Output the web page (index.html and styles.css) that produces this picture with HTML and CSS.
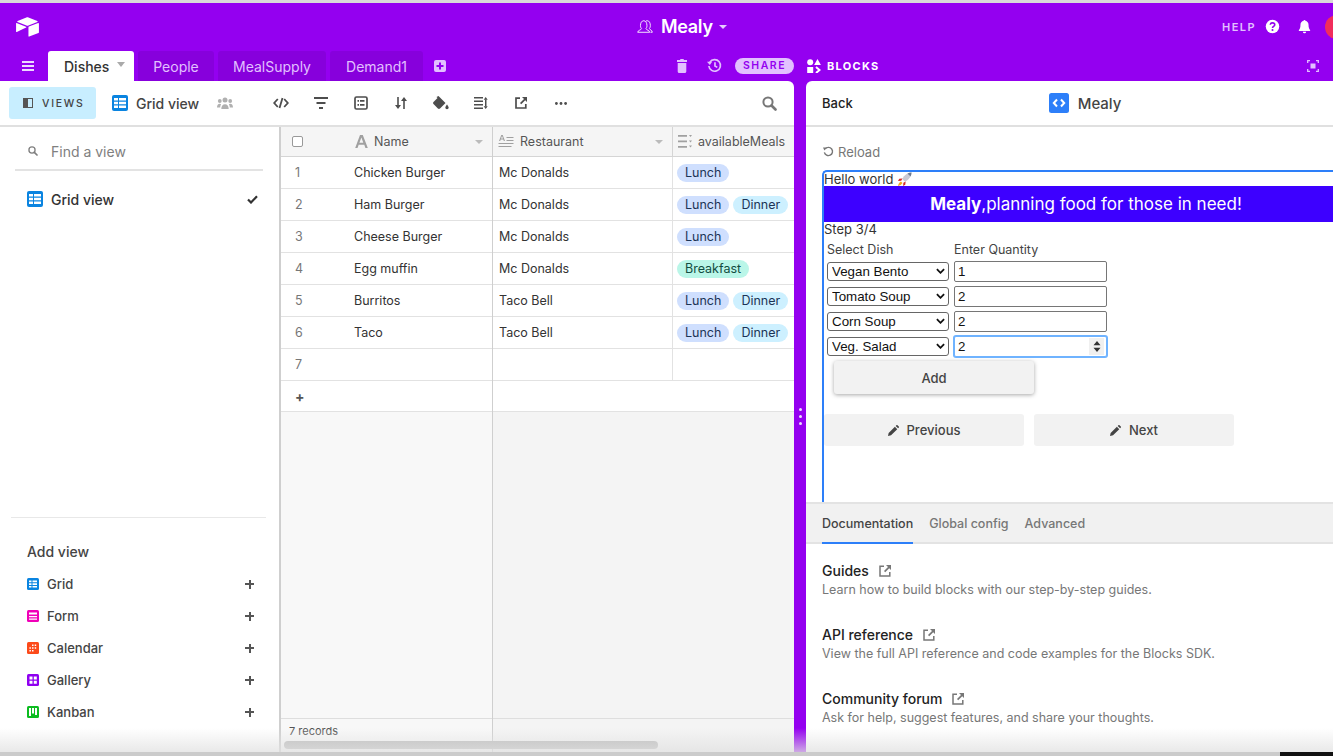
FILE: index.html
```html
<!DOCTYPE html>
<html lang="en">
<head>
<meta charset="utf-8">
<title>Mealy</title>
<link rel="stylesheet" href="styles.css">
</head>
<body>
<div class="page">
  <div class="topstrip"></div>
  <header class="topbar">
    <svg class="logo" viewBox="0 0 24 21"><path fill="#fff" d="M10.8.5 1.6 4.1c-.5.2-.5.9 0 1.1l9.3 3.7c.7.3 1.4.3 2.1 0l9.300-3.700c.5-.2.5-.9 0-1.100L13 .5c-.7-.3-1.500-.3-2.200 0zM13 10.700V20c0 .4.400.7.800.6l9.700-3.800c.3-.1.500-.4.500-.6V7c0-.4-.4-.7-.8-.6l-9.700 3.700c-.3.100-.5.400-.5.600zM10.700 11l-2.900 1.400-7 3.400c-.4.200-.8-.1-.8-.5V6.800c0-.2.100-.3.200-.4h.3l9.900 3.900c.5.200.6.500.300.700z"/></svg>
    <div class="base-title">
      <svg class="base-users" viewBox="0 0 18 16"><g fill="none" stroke="#fff" stroke-width="1"><path d="M.8 14.500c0-2.200 3.800-2.500 4.300-4-.4-.5-1.200-1.400-1.200-3.500 0-3 1.300-5.500 3.700-5.500 2.300 0 3.600 2.500 3.600 5.500 0 2.100-.8 3-1.200 3.500.5 1.500 4.300 1.800 4.300 4z"/><path d="M10.200 1.800c.4-.2.800-.3 1.300-.3 2.300 0 3.500 2.500 3.500 5.500 0 2.100-.8 3-1.100 3.500.3 1.200 3.300 1.500 3.300 4h-2"/></g></svg>
      <span class="base-name">Mealy</span>
      <span class="caret caret-white"></span>
    </div>
    <div class="top-right">
      <span class="help">HELP</span>
      <svg class="ic16" viewBox="0 0 16 16"><circle cx="8" cy="8" r="7.200" fill="#fff"/><path d="M5.600 6.200C5.700 4.800 6.700 4.100 8 4.100c1.400 0 2.400.8 2.400 2 0 1.900-2.400 1.800-2.400 3.500" fill="none" stroke="#9400f0" stroke-width="1.700"/><circle cx="8" cy="11.800" r="1.100" fill="#9400f0"/></svg>
      <svg class="ic16 bell" viewBox="0 0 16 16"><path fill="#fff" d="M8 1c-.6 0-1 .4-1 .9C5 2.400 3.700 4 3.700 6.200c0 3.300-.7 4.400-1.700 5.600-.3.400 0 .9.400.9h11.200c.4 0 .7-.5.400-.9-1-1.200-1.700-2.300-1.700-5.600C12.300 4 11 2.400 9 1.900 9 1.400 8.600 1 8 1zM6.300 13.500a1.700 1.700 0 0 0 3.400 0z"/></svg>
      <span class="avatar"></span>
    </div>
  </header>
  <nav class="tabbar">
    <div class="tabbar-left">
      <svg class="menu" viewBox="0 0 12 10"><path fill="#eed9ff" d="M0 0h12v2H0zM0 4h12v2H0zM0 8h12v2H0z"/></svg>
      <div class="tab tab-active">Dishes<span class="caret caret-gray"></span></div>
      <div class="tab">People</div>
      <div class="tab">MealSupply</div>
      <div class="tab">Demand1</div>
      <svg class="add-tab" viewBox="0 0 12 12"><path fill="#e2c0ff" fill-rule="evenodd" d="M2 0h8a2 2 0 0 1 2 2v8a2 2 0 0 1-2 2H2a2 2 0 0 1-2-2V2a2 2 0 0 1 2-2zm3 2.500v2.500H2.500v2H5v2.500h2V7h2.500V5H7V2.500z"/></svg>
      <div class="tab-actions">
        <svg class="trash" viewBox="0 0 10 14"><path fill="#e2c0ff" d="M3.500 0h3l.5 1h3v2H0V1h3zM.7 4h8.600v8.500c0 .8-.7 1.500-1.500 1.500H2.200c-.8 0-1.500-.7-1.500-1.500z"/></svg>
        <svg class="history" viewBox="0 0 16 16"><g fill="none" stroke="#e2c0ff" stroke-width="1.800"><path d="M3 4.500A6.200 6.200 0 1 1 2 8.500"/><path d="M8.500 4.500v4l2.500 1.500"/></g><path fill="#e2c0ff" d="M0 4h5.500L3 7.500z"/></svg>
        <span class="share">SHARE</span>
      </div>
    </div>
    <div class="gutter-top"></div>
    <div class="tabbar-right">
      <div class="blocks">
        <svg class="blocks-ic" viewBox="0 0 14 14"><circle cx="3.200" cy="3.200" r="3" fill="#fff"/><path fill="#fff" d="M10.500 0l3.400 6H7.100zM.2 8h6v6h-6z"/><path fill="none" stroke="#fff" stroke-width="2" d="M9 8l3.500 3L9 14"/></svg>
        <span>BLOCKS</span>
      </div>
      <svg class="fullscreen" viewBox="0 0 12 12"><path fill="none" stroke="#e2c0ff" stroke-width="1.300" d="M.7 3V.7H3M9 .7h2.300V3M11.300 9v2.300H9M3 11.300H.7V9"/><rect x="3.500" y="3.500" width="5" height="5" fill="#e2c0ff"/></svg>
    </div>
  </nav>
  <main class="main">
    <section class="left-panel">
      <div class="toolbar">
        <div class="views-btn">
          <svg class="views-ic" viewBox="0 0 10 10"><path fill="#555" d="M0 0h10v10H0z"/><path fill="#c8eeff" d="M5 1h4v8H5z"/></svg>
          <span>VIEWS</span>
        </div>
        <svg class="grid-ic" viewBox="0 0 16 16"><rect width="16" height="16" rx="2" fill="#0a84e0"/><path fill="#fff" d="M2 3h4v2.500H2zM7 3h7v2.500H7zM2 6.800h4v2.500H2zM7 6.800h7v2.500H7zM2 10.600h4v2.500H2zM7 10.600h7v2.500H7z"/></svg>
        <span class="view-name">Grid view</span>
        <svg class="people-ic" viewBox="0 0 16 12"><g fill="#b0b0b0"><circle cx="8" cy="3" r="2.500"/><circle cx="2.800" cy="4" r="1.900"/><circle cx="13.200" cy="4" r="1.900"/><path d="M4.300 12c0-3 1.500-4.800 3.700-4.800s3.700 1.800 3.700 4.800zM0 10.500c0-2.200 1-3.700 2.800-3.700.6 0 1 .2 1.300.4C3.500 8 3.200 9.200 3.200 10.500zM16 10.500c0-2.200-1-3.700-2.800-3.700-.6 0-1 .2-1.300.4.600.8.900 2 .9 3.300z"/></g></svg>
        <div class="tools">
          <span class="tool"><svg viewBox="0 0 16 12" width="16" height="12"><path fill="none" stroke="#4d4d4d" stroke-width="1.800" d="M4.800 2 1.200 6l3.600 4M11.200 2l3.600 4-3.600 4M9.500 1 6.500 11"/></svg></span>
          <span class="tool"><svg viewBox="0 0 14 12" width="14" height="12"><path fill="#4d4d4d" d="M0 0h14v2H0zM2.500 5h9v2h-9zM5 10h4v2H5z"/></svg></span>
          <span class="tool"><svg viewBox="0 0 14 14" width="14" height="14"><rect x="1" y="1" width="12" height="12" rx="1.500" fill="none" stroke="#4d4d4d" stroke-width="1.700"/><path fill="#4d4d4d" d="M3.500 4h1.500v1.700H3.500zM6 4h4.500v1.700H6zM3.500 8h1.500v1.700H3.500zM6 8h4.500v1.700H6z"/></svg></span>
          <span class="tool"><svg viewBox="0 0 12 12" width="12" height="12"><path fill="#4d4d4d" d="M2.200 0h1.600v8H6L3 12 0 8h2.200zM8.200 12h1.600V4H12L9 0 6 4h2.200z"/></svg></span>
          <span class="tool"><svg viewBox="0 0 16 14" width="16" height="14"><path fill="#4d4d4d" d="M5.500 0 7 1.500l5.500 5.500-5.500 5.500c-.6.600-1.500.6-2.100 0L.5 8.100c-.6-.6-.6-1.500 0-2.100l4-4-1-1zM14 8.500s1.700 2 1.700 3.100a1.700 1.700 0 0 1-3.400 0c0-1.100 1.700-3.100 1.700-3.100z"/></svg></span>
          <span class="tool"><svg viewBox="0 0 14 12" width="14" height="12"><path fill="#4d4d4d" d="M0 0h9v1.600H0zM0 3.400h9V5H0zM0 6.900h9v1.600H0zM0 10.400h9V12H0zM11 2.500h1.500v7H11z"/><path fill="#4d4d4d" d="M11.700 0l2 2.800h-4zM11.700 12l-2-2.800h4z"/></svg></span>
          <span class="tool"><svg viewBox="0 0 12 12" width="12" height="12"><path fill="none" stroke="#4d4d4d" stroke-width="1.700" d="M5 1.200H1v9.800h9.800V7"/><path fill="#4d4d4d" d="M7 0h5v5l-1.800-1.800-4 4L5 6l4-4z"/></svg></span>
          <span class="tool"><svg viewBox="0 0 12 3" width="12" height="3"><g fill="#4d4d4d"><circle cx="1.400" cy="1.500" r="1.400"/><circle cx="6" cy="1.500" r="1.400"/><circle cx="10.600" cy="1.500" r="1.400"/></g></svg></span>
        </div>
        <svg class="search-ic" viewBox="0 0 15 15"><circle cx="6" cy="6" r="4.600" fill="none" stroke="#777" stroke-width="2"/><path d="M9.500 9.500l4 4" stroke="#777" stroke-width="2.600" stroke-linecap="round"/></svg>
      </div>
      <div class="left-body">
        <aside class="sidebar">
          <div class="find">
            <svg class="find-ic" viewBox="0 0 15 15"><circle cx="6" cy="6" r="4.600" fill="none" stroke="#808080" stroke-width="2"/><path d="M9.500 9.500l4 4" stroke="#808080" stroke-width="2.600" stroke-linecap="round"/></svg>
            <span>Find a view</span>
          </div>
          <div class="view-item">
            <svg class="grid-ic-s" viewBox="0 0 16 16"><rect width="16" height="16" rx="2" fill="#0a84e0"/><path fill="#fff" d="M2 3h4v2.500H2zM7 3h7v2.500H7zM2 6.800h4v2.500H2zM7 6.800h7v2.500H7zM2 10.600h4v2.500H2zM7 10.600h7v2.500H7z"/></svg>
            <span class="view-item-name">Grid view</span>
            <svg class="check" viewBox="0 0 11 9"><path fill="none" stroke="#333" stroke-width="2.200" d="M1 4.500 4 7.500 10 1.200"/></svg>
          </div>
          <div class="sidebar-space"></div>
          <div class="add-view">
            <div class="add-title">Add view</div>
            <div class="add-row">
              <svg class="add-ic" viewBox="0 0 12 12"><rect width="12" height="12" rx="1.500" fill="#0a84e0"/><path fill="#fff" d="M2 2.500h2.500v1.700H2zM5.500 2.500H10v1.700H5.500zM2 5.200h2.500v1.700H2zM5.500 5.200H10v1.700H5.500zM2 7.900h2.500v1.700H2zM5.500 7.900H10v1.700H5.500z"/></svg>
              <span class="add-name">Grid</span><span class="plus"></span>
            </div>
            <div class="add-row">
              <svg class="add-ic" viewBox="0 0 12 12"><rect width="12" height="12" rx="1.500" fill="#f000b8"/><path fill="#fff" d="M2 2.500h8v2H2zM2 6h8v1.300H2zM2 8.500h8v1.300H2z"/></svg>
              <span class="add-name">Form</span><span class="plus"></span>
            </div>
            <div class="add-row">
              <svg class="add-ic" viewBox="0 0 12 12"><rect width="12" height="12" rx="1.500" fill="#fc4a1a"/><path fill="#fff" d="M5 2.500h1.500V4H5zM7.700 2.500h1.500V4H7.700zM2.400 5.200h1.500v1.500H2.400zM5 5.200h1.500v1.500H5zM7.700 5.200h1.500v1.500H7.700zM2.400 7.900h1.500v1.500H2.400zM5 7.900h1.500v1.500H5z"/></svg>
              <span class="add-name">Calendar</span><span class="plus"></span>
            </div>
            <div class="add-row">
              <svg class="add-ic" viewBox="0 0 12 12"><rect width="12" height="12" rx="1.500" fill="#8f00f0"/><path fill="#fff" d="M2.500 2.500h3v3h-3zM6.800 2.500h3v3h-3zM2.500 6.800h3v3h-3zM6.800 6.800h3v3h-3z"/></svg>
              <span class="add-name">Gallery</span><span class="plus"></span>
            </div>
            <div class="add-row">
              <svg class="add-ic" viewBox="0 0 12 12"><rect width="12" height="12" rx="1.500" fill="#0cbc20"/><path fill="#fff" d="M2 2h2v8H2zM5 2h2v5.500H5zM8 2h2v7H8z"/></svg>
              <span class="add-name">Kanban</span><span class="plus"></span>
            </div>
          </div>
        </aside>
        <div class="grid">
          <div class="pane pane-left">
            <div class="cell-head head-left">
              <span class="checkbox"></span>
              <svg class="field-a" viewBox="0 0 13 13"><path fill="#a0a0a0" d="M5 0h2.800l5 13h-2.400l-1.100-3.200H3.700L2.500 13H.2zM4.400 7.800h3.900L6.400 2.500z"/></svg>
              <span class="head-label">Name</span>
              <span class="caret caret-light"></span>
            </div>
            <div class="row"><span class="num">1</span><span class="name">Chicken Burger</span></div>
            <div class="row"><span class="num">2</span><span class="name">Ham Burger</span></div>
            <div class="row"><span class="num">3</span><span class="name">Cheese Burger</span></div>
            <div class="row"><span class="num">4</span><span class="name">Egg muffin</span></div>
            <div class="row"><span class="num">5</span><span class="name">Burritos</span></div>
            <div class="row"><span class="num">6</span><span class="name">Taco</span></div>
            <div class="row"><span class="num">7</span><span class="name"></span></div>
            <div class="row row-add"><span class="num plus-num">+</span></div>
            <div class="pane-fill"></div>
            <div class="records">7 records</div>
          </div>
          <div class="pane pane-right">
            <div class="head-right">
              <div class="cell-head col-rest">
                <svg class="field-long" viewBox="0 0 15 13"><g fill="#a0a0a0"><path d="M2.800 0h1.400l2.300 6H5.300l-.5-1.500H2.200L1.700 6H.5zM2.500 3.500h2L3.500 1z"/><path d="M8 2h7v1H8zM8 5h7v1H8zM0 8h15v1H0zM0 11h13v1H0z"/></g></svg>
                <span class="head-label">Restaurant</span>
                <span class="caret caret-light"></span>
              </div>
              <div class="cell-head col-meals">
                <svg class="field-multi" viewBox="0 0 14 13"><g fill="#a0a0a0"><path d="M0 0h9v1.700H0zM0 5.500h9v1.700H0zM0 11h9v1.700H0zM11 0h3l-1.500 2zM11 5.500h3l-1.500 2zM11 10.500h3l-1.500 2z"/></g></svg>
                <span class="head-label">availableMeals</span>
              </div>
            </div>
            <div class="row-r"><span class="rest">Mc Donalds</span><span class="meals"><span class="pill lunch">Lunch</span></span></div>
            <div class="row-r"><span class="rest">Mc Donalds</span><span class="meals"><span class="pill lunch">Lunch</span><span class="pill dinner">Dinner</span></span></div>
            <div class="row-r"><span class="rest">Mc Donalds</span><span class="meals"><span class="pill lunch">Lunch</span></span></div>
            <div class="row-r"><span class="rest">Mc Donalds</span><span class="meals"><span class="pill breakfast">Breakfast</span></span></div>
            <div class="row-r"><span class="rest">Taco Bell</span><span class="meals"><span class="pill lunch">Lunch</span><span class="pill dinner">Dinner</span></span></div>
            <div class="row-r"><span class="rest">Taco Bell</span><span class="meals"><span class="pill lunch">Lunch</span><span class="pill dinner">Dinner</span></span></div>
            <div class="row-r"><span class="rest"></span><span class="meals"></span></div>
            <div class="row-r row-r-add"></div>
            <div class="pane-fill"></div>
            <div class="records records-r"></div>
          </div>
          <div class="hscroll"></div>
        </div>
      </div>
    </section>
    <div class="gutter"><i></i><i></i><i></i></div>
    <section class="right-panel">
      <div class="block-head">
        <span class="back">Back</span>
        <div class="block-title">
          <svg class="block-ic" viewBox="0 0 20 20"><rect width="20" height="20" rx="2.500" fill="#2d7ff9"/><path fill="none" stroke="#fff" stroke-width="2" d="M8 6.500 4.800 10 8 13.500M12 6.500 15.200 10 12 13.500"/></svg>
          <span>Mealy</span>
        </div>
      </div>
      <div class="reload">
        <svg class="reload-ic" viewBox="0 0 12 12"><path fill="none" stroke="#777" stroke-width="1.500" d="M2.500 3A4.500 4.500 0 1 1 1.500 7"/><path fill="#777" d="M0 1.500h4.500L1.500 5z"/></svg>
        <span>Reload</span>
      </div>
      <div class="frame">
        <div class="hello">Hello world <svg class="rocket" viewBox="0 0 16 16"><path fill="#c9c9d4" d="M15.500.5C11.500.6 7.800 3 5.500 7.500l3 3C13 8.200 15.400 4.500 15.500.5z"/><path fill="#6c7a90" d="M15.500.5c-1.500 0-3 .4-4.300 1l3.300 3.300c.6-1.300 1-2.800 1-4.300z"/><path fill="#d62a2a" d="M5.800 6.800 2.500 7.200 1 9.500l3.500-.3zM9.200 10.200l-.4 3.300L6.500 15l.3-3.500z"/><path fill="#f4a81c" d="M4.200 10.200C2.500 11 1.500 13 1 15c2-.5 4-1.500 4.800-3.200z"/></svg></div>
        <div class="banner"><b>Mealy</b>,planning food for those in need!</div>
        <div class="step">Step 3/4</div>
        <div class="form">
          <div class="labels"><span class="lab-dish">Select Dish</span><span>Enter Quantity</span></div>
          <div class="frow">
            <span class="sel-wrap"><select class="sel"><option>Vegan Bento</option></select><svg class="chev" viewBox="0 0 10 6"><path fill="none" stroke="#111" stroke-width="2" d="M1 1l4 4 4-4"/></svg></span>
            <input class="qty" value="1">
          </div>
          <div class="frow">
            <span class="sel-wrap"><select class="sel"><option>Tomato Soup</option></select><svg class="chev" viewBox="0 0 10 6"><path fill="none" stroke="#111" stroke-width="2" d="M1 1l4 4 4-4"/></svg></span>
            <input class="qty" value="2">
          </div>
          <div class="frow">
            <span class="sel-wrap"><select class="sel"><option>Corn Soup</option></select><svg class="chev" viewBox="0 0 10 6"><path fill="none" stroke="#111" stroke-width="2" d="M1 1l4 4 4-4"/></svg></span>
            <input class="qty" value="2">
          </div>
          <div class="frow">
            <span class="sel-wrap"><select class="sel"><option>Veg. Salad</option></select><svg class="chev" viewBox="0 0 10 6"><path fill="none" stroke="#111" stroke-width="2" d="M1 1l4 4 4-4"/></svg></span>
            <span class="qty-wrap"><input class="qty qty-focus" value="2"><span class="spin"><svg viewBox="0 0 8 11" width="8" height="11"><path fill="#333" d="M4 0l3.500 4.300h-7zM4 11 .5 6.700h7z"/></svg></span></span>
          </div>
        </div>
        <div class="add-btn">Add</div>
        <div class="nav-btns">
          <div class="nav-btn"><svg class="pencil" viewBox="0 0 12 12"><path fill="#444" d="M0 12l.7-3.300L7.500 1.900l2.600 2.600-6.800 6.800zM8.400 1 9.200.2c.3-.3.800-.3 1.100 0l1.500 1.500c.3.300.3.800 0 1.100l-.8.800z"/></svg>Previous</div>
          <div class="nav-btn"><svg class="pencil" viewBox="0 0 12 12"><path fill="#444" d="M0 12l.7-3.300L7.500 1.900l2.600 2.600-6.800 6.800zM8.400 1 9.200.2c.3-.3.800-.3 1.100 0l1.500 1.500c.3.300.3.800 0 1.100l-.8.800z"/></svg>Next</div>
        </div>
      </div>
      <div class="doc-tabs">
        <span class="doc-tab doc-tab-active">Documentation</span>
        <span class="doc-tab">Global config</span>
        <span class="doc-tab">Advanced</span>
      </div>
      <div class="docs">
        <div class="doc">
          <div class="doc-title">Guides<svg class="ext" viewBox="0 0 12 12"><path fill="none" stroke="#777" stroke-width="1.500" d="M5 1.200H1v9.800h9.800V7"/><path fill="#777" d="M7 0h5v5l-1.800-1.800-4 4L5 6l4-4z"/></svg></div>
          <div class="doc-text">Learn how to build blocks with our step-by-step guides.</div>
        </div>
        <div class="doc">
          <div class="doc-title">API reference<svg class="ext" viewBox="0 0 12 12"><path fill="none" stroke="#777" stroke-width="1.500" d="M5 1.200H1v9.800h9.800V7"/><path fill="#777" d="M7 0h5v5l-1.800-1.800-4 4L5 6l4-4z"/></svg></div>
          <div class="doc-text">View the full API reference and code examples for the Blocks SDK.</div>
        </div>
        <div class="doc">
          <div class="doc-title">Community forum<svg class="ext" viewBox="0 0 12 12"><path fill="none" stroke="#777" stroke-width="1.500" d="M5 1.200H1v9.800h9.800V7"/><path fill="#777" d="M7 0h5v5l-1.800-1.800-4 4L5 6l4-4z"/></svg></div>
          <div class="doc-text">Ask for help, suggest features, and share your thoughts.</div>
        </div>
      </div>
    </section>
    <div class="fade"></div>
  </main>
  <footer class="bottom"><span class="bottom-dark"></span></footer>
</div>
</body>
</html>
```
FILE: styles.css
```css
* { box-sizing: border-box; }
html, body { margin: 0; height: 100%; overflow: hidden; }
body { font-family: Inter, "Liberation Sans", sans-serif; color: #333; background: #fff; }
.page { width: 1333px; height: 756px; display: flex; flex-direction: column; overflow: hidden; background: #9400f0; }
.topstrip { height: 3px; background: #d9d9d9; flex: none; }

.topbar { height: 47px; flex: none; display: flex; align-items: center; padding-left: 16px; position: relative; }
.logo { width: 23px; height: 20px; margin-top: 0; }
.base-title { display: flex; align-items: center; margin-left: 598px; }
.base-users { width: 16px; height: 15px; }
.base-name { color: #fff; font-size: 18px; font-weight: 600; margin-left: 8px; letter-spacing: -.3px; }
.caret { width: 0; height: 0; border-left: 4px solid transparent; border-right: 4px solid transparent; display: inline-block; }
.caret-white { border-top: 4px solid #e6ccff; margin-left: 6px; }
.caret-gray { border-top: 5px solid #aaa; margin-left: 8px; position: relative; top: -2px; }
.caret-light { border-top: 4px solid #bbb; margin-left: auto; }
.top-right { display: flex; align-items: center; margin-left: auto; width: 111px; flex: none; }
.help { color: #e2c0ff; font-size: 11px; font-weight: 600; letter-spacing: 1.500px; }
.ic16 { width: 15px; height: 15px; margin-left: 9px; flex: none; }
.bell { margin-left: 17px; }
.avatar { width: 24px; height: 24px; border-radius: 50%; background: #f12d5c; margin-left: 13px; flex: none; }

.tabbar { height: 31px; flex: none; display: flex; align-items: stretch; }
.tabbar-left { width: 794px; flex: none; display: flex; align-items: flex-end; padding-left: 22px; }
.menu { width: 12px; height: 10px; margin: 0 14px 10px 0; flex: none; }
.tab { height: 30px; padding: 0 15px; margin-right: 4px; background: #8700dc; color: #e2c0ff; font-size: 14px; display: flex; align-items: center; border-radius: 3px 3px 0 0; }
.tab-active { width: 86px; padding: 0 0 0 16px; background: #fff; color: #333; font-weight: 500; }
.tab:nth-child(3) { width: 76px; padding: 0; justify-content: center; }
.tab:nth-child(4) { width: 108px; padding: 0; justify-content: center; }
.tab:nth-child(5) { width: 93px; padding: 0; justify-content: center; }
.add-tab { width: 12px; height: 12px; margin: 0 0 9px 7px; flex: none; }
.tab-actions { margin-left: auto; display: flex; align-items: center; height: 31px; }
.trash { width: 10px; height: 14px; margin-right: 20px; }
.history { width: 15px; height: 15px; margin-right: 13px; }
.share { width: 59px; height: 16px; border-radius: 8px; background: #e2c0ff; color: #9400f0; font-size: 10.500px; font-weight: 600; letter-spacing: 1.500px; display: flex; align-items: center; justify-content: center; }
.gutter-top { width: 12px; flex: none; }
.tabbar-right { flex: 1; display: flex; align-items: center; justify-content: space-between; padding-right: 14px; }
.blocks { display: flex; align-items: center; color: #fff; font-size: 11px; font-weight: 700; letter-spacing: 1.300px; }
.blocks-ic { width: 14px; height: 14px; margin: 0 6px 0 1px; }
.fullscreen { width: 12px; height: 12px; }

.main { flex: 1; display: flex; min-height: 0; position: relative; }
.left-panel { width: 794px; flex: none; background: #fff; border-radius: 0 6px 0 0; display: flex; flex-direction: column; overflow: hidden; }
.toolbar { height: 46px; flex: none; border-bottom: 2px solid #e0e0e0; display: flex; align-items: center; padding-left: 9px; }
.views-btn { width: 87px; height: 32px; background: #c8eeff; border-radius: 3px; display: flex; align-items: center; padding-left: 14px; color: #444; font-size: 10.500px; font-weight: 500; letter-spacing: 1.700px; flex: none; }
.views-ic { width: 10px; height: 10px; margin-right: 9px; }
.grid-ic { width: 16px; height: 16px; margin-left: 16px; flex: none; }
.view-name { font-size: 14px; font-weight: 500; color: #444; margin-left: 8px; width: 65px; white-space: nowrap; }
.people-ic { width: 16px; height: 12px; margin-left: 16px; flex: none; }
.tools { display: flex; margin-left: 28px; }
.tool { width: 40px; display: flex; justify-content: center; align-items: center; }
.search-ic { width: 15px; height: 15px; margin-left: auto; margin-right: 17px; }

.left-body { flex: 1; display: flex; min-height: 0; }
.sidebar { width: 281px; flex: none; border-right: 2px solid #cfcfcf; display: flex; flex-direction: column; background: #fff; }
.find { margin: 0 16px 0 15px; height: 44px; border-bottom: 2px solid #e3e3e3; display: flex; align-items: center; padding: 6px 0 0 13px; color: #808080; font-size: 14px; }
.find-ic { width: 10px; height: 10px; margin-right: 13px; }
.view-item { display: flex; align-items: center; margin: 19px 21px 0 27px; height: 18px; }
.grid-ic-s { width: 16px; height: 16px; flex: none; }
.view-item-name { margin-left: 8px; font-size: 14px; font-weight: 500; color: #333; }
.check { width: 11px; height: 9px; margin-left: auto; }
.sidebar-space { flex: 1; }
.add-view { margin: 0 13px 0 11px; border-top: 1px solid #e8e8e8; padding: 25px 0 24px 16px; }
.add-title { font-size: 14px; font-weight: 500; color: #444; height: 17px; margin-bottom: 8px; }
.add-row { height: 32px; display: flex; align-items: center; font-size: 13px; color: #444; font-weight: 500; padding-right: 12px; }
.add-ic { width: 12px; height: 12px; margin-right: 8px; flex: none; }
.plus { width: 9px; height: 9px; margin-left: auto; background: linear-gradient(#555, #555) center/9px 2px no-repeat, linear-gradient(#555, #555) center/2px 9px no-repeat; }

.grid { flex: 1; display: flex; position: relative; min-width: 0; background: #f4f4f4; }
.pane { display: flex; flex-direction: column; height: 100%; }
.pane-left { width: 212px; flex: none; border-right: 1px solid #cfcfcf; background: #f8f8f8; }
.pane-right { flex: 1; min-width: 0; overflow: hidden; }
.cell-head { height: 30px; background: #f5f5f5; border-bottom: 1px solid #d5d5d5; display: flex; align-items: center; font-size: 12.500px; color: #555; flex: none; }
.head-left { padding: 0 9px 0 11px; }
.checkbox { width: 11px; height: 11px; border: 1px solid #999; border-radius: 2px; background: #fff; margin-right: 52px; flex: none; }
.field-a { width: 13px; height: 13px; margin-right: 6px; flex: none; }
.head-label { white-space: nowrap; }
.head-right { display: flex; flex: none; }
.col-rest { width: 180px; padding: 0 9px 0 5px; border-right: 1px solid #d5d5d5; }
.col-meals { width: 122px; padding-left: 5px; }
.field-long { width: 16px; height: 13px; margin-right: 6px; flex: none; }
.field-multi { width: 14px; height: 13px; margin-right: 6px; flex: none; }
.row, .row-r { height: 32px; background: #fff; border-bottom: 1px solid #e2e2e2; display: flex; align-items: center; font-size: 12.500px; color: #333; flex: none; }
.num { width: 73px; padding-left: 14px; color: #777; flex: none; }
.plus-num { font-weight: 700; color: #555; font-size: 14px; }
.row-add, .row-r-add { height: 31px; }
.rest { width: 180px; height: 100%; padding-left: 6px; border-right: 1px solid #e2e2e2; display: flex; align-items: center; flex: none; }
.meals { display: flex; gap: 4px; padding-left: 4px; white-space: nowrap; }
.pill { height: 18px; border-radius: 9px; padding: 0 8px; display: flex; align-items: center; color: #1c3456; font-size: 12.500px; }
.lunch { background: #cfdffe; }
.dinner { background: #cdf0ff; }
.breakfast { background: #baf6e8; color: #124d42; }
.pane-fill { flex: 1; }
.records { height: 34px; flex: none; border-top: 1px solid #dedede; padding: 5px 0 0 8px; font-size: 11px; color: #555; }
.hscroll { position: absolute; left: 3px; bottom: 3px; width: 374px; height: 8px; border-radius: 4px; background: #bdbdbd; }

.gutter { width: 12px; flex: none; display: flex; flex-direction: column; align-items: center; justify-content: center; gap: 4px; padding-bottom: 0; margin-top: 0; }
.gutter i { width: 3px; height: 3px; border-radius: 50%; background: #ecd9ff; }
.right-panel { flex: 1; min-width: 0; background: #fff; border-radius: 6px 0 0 0; display: flex; flex-direction: column; overflow: hidden; }
.block-head { height: 46px; flex: none; border-bottom: 2px solid #e0e0e0; display: flex; align-items: center; padding-left: 16px; font-size: 13px; position: relative; }
.back { color: #222; font-weight: 500; }
.block-title { display: flex; align-items: center; margin-left: 196px; font-size: 15px; font-weight: 500; color: #444; }
.block-ic { width: 20px; height: 20px; margin-right: 9px; }
.reload { height: 43px; flex: none; display: flex; align-items: center; padding: 6px 0 0 17px; font-size: 13px; color: #777; }
.reload-ic { width: 11px; height: 11px; margin-right: 4px; }
.frame { width: 526px; height: 332px; flex: none; margin-left: 16px; border: solid #2d7ff9; border-width: 2px 0 0 2px; border-radius: 5px 0 0 0; background: #fff; font-size: 13px; color: #333; }
.hello { height: 14px; line-height: 13px; white-space: nowrap; }
.rocket { width: 15px; height: 15px; vertical-align: -3px; }
.banner { width: 524px; height: 36px; background: #3d00ff; color: #fff; font-size: 17px; display: flex; align-items: center; justify-content: center; white-space: pre; }
.banner b { font-weight: 700; }
.step { height: 17px; line-height: 15px; }
.form { padding-left: 3px; }
.labels { display: flex; height: 20px; align-items: center; font-size: 12.500px; color: #444; }
.lab-dish { width: 127px; }
.frow { display: flex; align-items: center; height: 25px; }
.sel-wrap { position: relative; width: 122px; height: 19px; margin-right: 5px; flex: none; display: block; }
.sel { appearance: none; -webkit-appearance: none; width: 122px; height: 19px; border: 1px solid #666; border-radius: 3px; background: #fff; font: 13.330px "Liberation Sans", sans-serif; color: #111; padding: 0 0 0 4px; display: block; }
.chev { position: absolute; right: 4px; top: 6px; width: 9px; height: 6px; }
.qty { width: 153px; height: 21px; border: 1px solid #767676; border-radius: 2px; font: 13.330px "Liberation Sans", sans-serif; color: #111; padding: 0 0 0 3px; background: #fff; display: block; }
.qty-wrap { position: relative; display: block; }
.qty-focus { border-color: #6fb3ff; box-shadow: 0 0 0 1px #6fb3ff; outline: 0; }
.spin { position: absolute; right: 3px; top: 2px; width: 15px; height: 17px; background: #f0f0f0; display: flex; align-items: center; justify-content: center; }
.add-btn { margin: 2px 0 0 10px; width: 200px; height: 33px; background: #f2f2f2; border-radius: 3px; box-shadow: 0 1px 4px rgba(0,0,0,.35); display: flex; align-items: center; justify-content: center; font-size: 13px; font-weight: 500; color: #444; }
.nav-btns { display: flex; gap: 10px; margin-top: 20px; }
.nav-btn { width: 200px; height: 32px; background: #f2f2f2; border-radius: 3px; display: flex; align-items: center; justify-content: center; font-size: 13px; font-weight: 500; color: #444; }
.pencil { width: 11px; height: 11px; margin-right: 8px; }
.doc-tabs { height: 42px; flex: none; background: #f1f1f1; border-top: 2px solid #e3e3e3; border-bottom: 2px solid #e3e3e3; display: flex; gap: 16px; padding-left: 16px; align-items: stretch; }
.doc-tab { display: flex; align-items: center; font-size: 12.500px; font-weight: 500; color: #777; margin-bottom: -2px; border-bottom: 2px solid transparent; }
.doc-tab-active { color: #444; border-bottom-color: #2d7ff9; }
.docs { flex: 1; padding: 18px 0 0 16px; }
.doc { height: 64px; }
.doc-title { font-size: 14px; font-weight: 500; color: #222; display: flex; align-items: center; height: 17px; }
.ext { width: 12px; height: 12px; margin-left: 10px; }
.doc-text { font-size: 12.500px; color: #777; margin-top: 3px; white-space: nowrap; }
.fade { position: absolute; left: 0; right: 0; bottom: 0; height: 24px; background: linear-gradient(rgba(225,225,225,0), rgba(225,225,225,.75)); pointer-events: none; }
.bottom { height: 4px; flex: none; background: #cbcbcb; display: flex; justify-content: flex-end; }
.bottom-dark { width: 53px; background: #111; }
```
